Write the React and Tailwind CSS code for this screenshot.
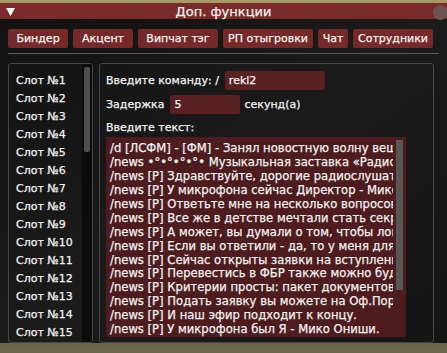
import React from 'react'

const tabs = [
  { label: 'Биндер', w: 'w-[60px]' },
  { label: 'Акцент', w: 'w-[60px]' },
  { label: 'Випчат тэг', w: 'w-[80px]' },
  { label: 'РП отыгровки', w: 'w-[90px]' },
  { label: 'Чат', w: 'w-[30px]' },
  { label: 'Сотрудники', w: 'w-[80px]' },
]

const slots = Array.from({ length: 15 }, (_, i) => `Слот №${i + 1}`)

const lines = [
  '/d [ЛСФМ] - [ФМ] - Занял новостную волну вещания',
  '/news •°•°•°•°• Музыкальная заставка «Радиоцентра» •°•°•°•°•',
  '/news [Р] Здравствуйте, дорогие радиослушатели!',
  '/news [Р] У микрофона сейчас Директор - Мико Ониши.',
  '/news [Р] Ответьте мне на несколько вопросов.',
  '/news [Р] Все же в детстве мечтали стать секретным агентом?',
  '/news [Р] А может, вы думали о том, чтобы ловить преступников?',
  '/news [Р] Если вы ответили - да, то у меня для вас хорошие новости!',
  '/news [Р] Сейчас открыты заявки на вступление в ФБР!',
  '/news [Р] Перевестись в ФБР также можно будет!',
  '/news [Р] Критерии просты: пакет документов, опрятный вид.',
  '/news [Р] Подать заявку вы можете на Оф.Портале штата.',
  '/news [Р] И наш эфир подходит к концу.',
  '/news [Р] У микрофона был Я - Мико Ониши.',
]

export default function App() {
  return (
    <div
      className="w-[447px] h-[353px] overflow-hidden bg-gradient-to-b from-[#a89a6a] via-[#2a2a22] to-[#6b684c] text-[11px] leading-none text-[#f2f2f2] [-webkit-text-stroke:0.25px_#f2f2f2]"
      style={{ fontFamily: '"DejaVu Sans", "Open Sans", sans-serif' }}
    >
      <div className="pt-[3px]">
        <div className="h-[340px] flex flex-col bg-gradient-to-br from-[#121212] via-[#1b1b1b] to-[#151515]">
          {/* title bar */}
          <div className="h-[17px] bg-[#7b2a2a] flex items-center relative">
            <svg className="absolute left-[6px] top-[5px]" width="9" height="8" viewBox="0 0 9 8">
              <polygon points="0,0 9,0 4.5,8" fill="#ffffff" />
            </svg>
            <div className="w-full text-center text-[13px]">Доп. функции</div>
            <div className="absolute left-[433px] top-[2px] w-[15px] h-[15px] rounded-full bg-[#6d5454]" />
          </div>

          <div className="px-[8px] pt-[10px] flex flex-col">
            <div className="flex gap-[5px]">
              {tabs.map(t => (
                <div key={t.label} className={`${t.w} h-[19px] bg-[#772829] rounded-[2px] flex items-center justify-center whitespace-nowrap`}>
                  {t.label}
                </div>
              ))}
            </div>
            <div className="mt-[5px] h-px bg-[#5a5a5a]" />

            <div className="mt-[9px] h-[280px] flex gap-[6px]">
              {/* slot list */}
              <div className="w-[85px] border border-[#45454c] rounded-[3px] flex relative overflow-hidden">
                <div className="flex-1 pl-[7px] pt-[7px] flex flex-col">
                  {slots.map(s => (
                    <div key={s} className="h-[18px] flex items-center whitespace-nowrap">{s}</div>
                  ))}
                </div>
                <div className="w-[10px] bg-[#0c0c0c] pt-[3px] flex justify-center">
                  <div className="w-[6px] h-[85px] rounded-[2px] bg-[#4f4f4f]" />
                </div>
              </div>

              {/* editor */}
              <div className="w-[335px] border border-[#45454c] rounded-[3px] pl-[6px] pt-[7px] flex flex-col">
                <div className="flex items-center h-[19px]">
                  <span>Введите команду: /</span>
                  <div className="ml-[6px] w-[100px] h-[19px] bg-[#5a2123] rounded-[2px] flex items-center pl-[4px]">rekl2</div>
                </div>
                <div className="mt-[5px] flex items-center h-[19px]">
                  <span>Задержка</span>
                  <div className="ml-[6px] w-[70px] h-[19px] bg-[#5a2123] rounded-[2px] flex items-center pl-[4px]">5</div>
                  <span className="ml-[4px]">секунд(а)</span>
                </div>
                <div className="mt-[5px] h-[16px] flex items-center">Введите текст:</div>
                <div className="mt-[2px] w-[300px] h-[200px] bg-[#4e1c1e] flex">
                  <div className="w-[287px] overflow-hidden pl-[4px] pt-[5px] flex flex-col text-[11.6px]">
                    {lines.map((l, i) => (
                      <div key={i} className="h-[14px] flex items-center whitespace-nowrap">{l}</div>
                    ))}
                  </div>
                  <div className="w-[13px] pt-[3px] pl-[3px] flex justify-start">
                    <div className="w-[7px] h-[150px] bg-[#565656]" />
                  </div>
                </div>
              </div>
            </div>
          </div>
        </div>
      </div>
    </div>
  )
}
